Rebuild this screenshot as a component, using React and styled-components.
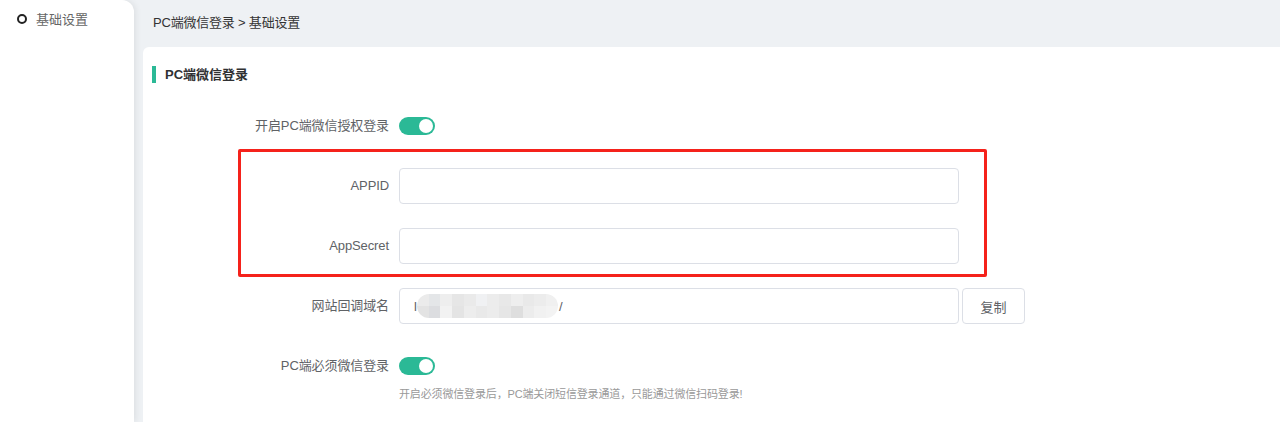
import React from 'react'
import styled, { createGlobalStyle } from 'styled-components'

const GlobalStyle = createGlobalStyle`
  html, body {
    margin: 0;
    padding: 0;
    background: #eef1f4;
    font-family: "Liberation Sans", "Noto Sans CJK SC", sans-serif;
  }
`

const MOSAIC = [
  '#ebebeb', '#e4e6e8', '#eeeeee', '#e6e6e6', '#eaeaea', '#f0f1f3', '#ececec', '#e8e8e8', '#eeeeee', '#e9e9e9', '#ececec', '#f0f0f0',
  '#e3e3e3', '#dcdde0', '#f2f2f2', '#e4e4e4', '#ededed', '#e9e9e9', '#ececec', '#e6e6e6', '#dedede', '#ececec', '#f1f1f1', '#f3f3f3',
]

const App = () => {
  const [authOn, setAuthOn] = React.useState(true)
  const [mustOn, setMustOn] = React.useState(true)

  return (
    <Page>
      <GlobalStyle />
      <Sidebar>
        <MenuItem>
          <Dot />
          <span>基础设置</span>
        </MenuItem>
      </Sidebar>
      <Main>
        <Breadcrumb>PC端微信登录 &gt; 基础设置</Breadcrumb>
        <Panel>
          <SectionTitle>PC端微信登录</SectionTitle>
          <Form>
            <FormItem>
              <Label>开启PC端微信授权登录</Label>
              <Switch on={authOn} onClick={() => setAuthOn(!authOn)} />
            </FormItem>

            <Highlight>
              <FormItem>
                <Label>APPID</Label>
                <Input />
              </FormItem>
              <FormItem>
                <Label>AppSecret</Label>
                <Input />
              </FormItem>
            </Highlight>

            <FormItem>
              <Label>网站回调域名</Label>
              <Input>
                <span>l</span>
                <Mosaic>
                  {MOSAIC.map((c, i) => <Cell key={i} style={{ background: c }} />)}
                </Mosaic>
                <span>/</span>
              </Input>
              <CopyButton>复制</CopyButton>
            </FormItem>

            <FormItem top>
              <Label>PC端必须微信登录</Label>
              <Control>
                <SwitchLine>
                  <Switch on={mustOn} onClick={() => setMustOn(!mustOn)} />
                </SwitchLine>
                <Hint>开启必须微信登录后，PC端关闭短信登录通道，只能通过微信扫码登录!</Hint>
              </Control>
            </FormItem>
          </Form>
        </Panel>
      </Main>
    </Page>
  )
}

export default App

const Page = styled.div`
  display: flex;
  height: 422px;
  overflow: hidden;
  background: #eef1f4;
`

const Sidebar = styled.aside`
  width: 134px;
  flex-shrink: 0;
  background: #fff;
  border-top-right-radius: 12px;
  box-shadow: 2px 0 6px rgba(0, 0, 0, 0.07);
  padding-top: 9px;
  box-sizing: border-box;
  position: relative;
  z-index: 1;
`

const MenuItem = styled.div`
  display: flex;
  align-items: center;
  height: 18px;
  padding-left: 17px;
  gap: 9px;
  font-size: 13px;
  color: #666;
`

const Dot = styled.i`
  width: 10px;
  height: 10px;
  border: 2px solid #222;
  border-radius: 50%;
  box-sizing: border-box;
  margin-top: 2px;
`

const Main = styled.main`
  flex: 1;
  display: flex;
  flex-direction: column;
  padding-left: 9px;
  min-width: 0;
`

const Breadcrumb = styled.div`
  height: 47px;
  line-height: 46px;
  padding-left: 10px;
  font-size: 13px;
  letter-spacing: -0.2px;
  color: #333;
  flex-shrink: 0;
`

const Panel = styled.section`
  flex: 1;
  background: #fff;
  border-top-left-radius: 6px;
  padding: 19px 0 0 9px;
`

const SectionTitle = styled.h2`
  margin: 0;
  height: 17px;
  line-height: 17px;
  border-left: 4px solid #2bb996;
  padding-left: 9px;
  font-size: 13px;
  font-weight: 600;
  color: #303133;
`

const Form = styled.form`
  margin-top: 25px;
  padding-left: 89px;
`

const FormItem = styled.div`
  display: flex;
  align-items: ${p => (p.top ? 'flex-start' : 'center')};
  min-height: 36px;
  margin-bottom: 24px;
`

const Label = styled.label`
  width: 158px;
  flex-shrink: 0;
  box-sizing: border-box;
  padding-right: 10px;
  text-align: right;
  font-size: 13px;
  line-height: 36px;
  letter-spacing: -0.1px;
  color: #606266;
`

const Switch = styled.span`
  position: relative;
  display: inline-block;
  width: 36px;
  height: 18px;
  border-radius: 9px;
  background: ${p => (p.on ? '#2bb996' : '#dcdfe6')};
  cursor: pointer;

  &::after {
    content: '';
    position: absolute;
    top: 2px;
    left: ${p => (p.on ? '20px' : '2px')};
    width: 14px;
    height: 14px;
    border-radius: 50%;
    background: #fff;
  }
`

const Highlight = styled.div`
  position: relative;

  &::before {
    content: '';
    position: absolute;
    left: -3px;
    top: -19px;
    width: 749px;
    height: 128px;
    border: 3px solid #f5221b;
    border-radius: 2px;
    box-sizing: border-box;
    pointer-events: none;
  }
`

const Input = styled.div`
  width: 560px;
  height: 36px;
  box-sizing: border-box;
  border: 1px solid #dcdfe6;
  border-radius: 4px;
  background: #fff;
  display: flex;
  align-items: center;
  padding-left: 14px;
  font-size: 13px;
  color: #606266;
`

const Mosaic = styled.span`
  display: grid;
  grid-template-columns: repeat(12, 1fr);
  grid-template-rows: 12px 12px;
  width: 141px;
  margin: 0 1px 0 0;
  border-radius: 12px;
  overflow: hidden;
  filter: blur(0.5px);
`

const Cell = styled.span`
  display: block;
`

const CopyButton = styled.button`
  margin-left: 3px;
  width: 63px;
  height: 36px;
  border: 1px solid #dcdfe6;
  border-radius: 4px;
  background: #fff;
  font-family: inherit;
  font-size: 13px;
  color: #606266;
  cursor: pointer;
`

const Control = styled.div`
  display: flex;
  flex-direction: column;
`

const SwitchLine = styled.div`
  height: 36px;
  display: flex;
  align-items: center;
`

const Hint = styled.div`
  margin-top: 2px;
  font-size: 11px;
  line-height: 16px;
  letter-spacing: -0.15px;
  color: #999;
`
